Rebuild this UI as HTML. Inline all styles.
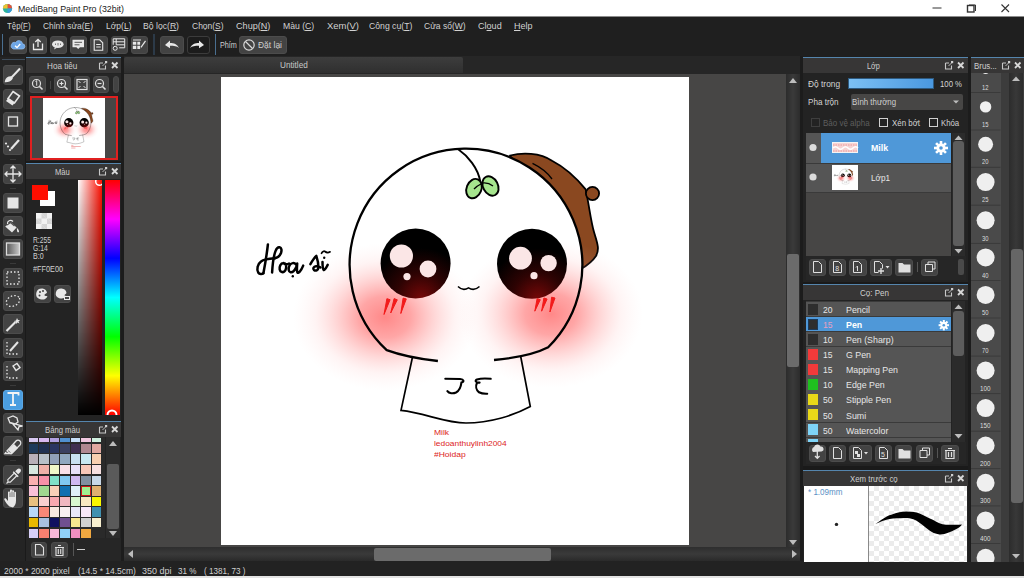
<!DOCTYPE html>
<html><head><meta charset="utf-8">
<style>
*{margin:0;padding:0;box-sizing:border-box}
html,body{width:1024px;height:578px;overflow:hidden;background:#202020;font-family:"Liberation Sans",sans-serif;color:#d8d8d8}
.a{position:absolute}
.t{position:absolute;white-space:pre;line-height:1;transform-origin:0 0}
.b{position:absolute;background:#464646;border:1px solid #505050;border-radius:2px}
.tb{position:absolute;background:#434343;border:1px solid #4c4c4c;border-radius:3px}
svg{position:absolute;overflow:visible}
</style></head><body>

<div class="a" style="left:0px;top:0px;width:1024px;height:16px;background:#fff;"></div>
<svg style="left:2px;top:3px" width="11" height="11" viewBox="0 0 11 11"><circle cx="5.5" cy="5.5" r="4.6" fill="#2bb39a"/><path d="M5.5 0.9 A4.6 4.6 0 0 1 10.1 5.5 L5.5 5.5Z" fill="#e8503a"/><path d="M10.1 5.5 A4.6 4.6 0 0 1 5.5 10.1 L5.5 5.5Z" fill="#3a9ad9"/><path d="M0.9 5.5 A4.6 4.6 0 0 1 5.5 0.9 L5.5 5.5Z" fill="#f2c230"/></svg>
<div class="t" style="left:17.8px;top:3.9px;font-size:9.8px;transform:scaleX(0.9012);color:#202020;">MediBang Paint Pro (32bit)</div>
<svg style="left:932px;top:4px" width="80" height="9"><path d="M0.5 4 H9.5" stroke="#333" stroke-width="1"/><rect x="35.5" y="1.5" width="6.5" height="6.5" fill="none" stroke="#333" stroke-width="1.4"/><path d="M37 1 H43.5 V7" fill="none" stroke="#333" stroke-width="1"/><path d="M69.5 0.5 L77 8 M77 0.5 L69.5 8" stroke="#333" stroke-width="1.1"/></svg>
<div class="a" style="left:0px;top:16px;width:1024px;height:17px;background:#1f1f1f;"></div>
<div class="a" style="left:0px;top:16px;width:1024px;height:1px;background:#8c8c8c;"></div>
<div class="t" style="left:7.0px;top:20.7px;font-size:9.8px;transform:scaleX(0.7991);color:#d2d2d2;">Tệp(<u>F</u>)</div>
<div class="t" style="left:43.0px;top:20.7px;font-size:9.8px;transform:scaleX(0.8574);color:#d2d2d2;">Chỉnh sửa(<u>E</u>)</div>
<div class="t" style="left:105.5px;top:20.7px;font-size:9.8px;transform:scaleX(0.8699);color:#d2d2d2;">Lớp(<u>L</u>)</div>
<div class="t" style="left:143.0px;top:20.7px;font-size:9.8px;transform:scaleX(0.8814);color:#d2d2d2;">Bộ lọc(<u>R</u>)</div>
<div class="t" style="left:191.7px;top:20.7px;font-size:9.8px;transform:scaleX(0.8658);color:#d2d2d2;">Chọn(<u>S</u>)</div>
<div class="t" style="left:235.6px;top:20.7px;font-size:9.8px;transform:scaleX(0.9289);color:#d2d2d2;">Chụp(<u>N</u>)</div>
<div class="t" style="left:282.6px;top:20.7px;font-size:9.8px;transform:scaleX(0.8816);color:#d2d2d2;">Màu (<u>C</u>)</div>
<div class="t" style="left:327.0px;top:20.7px;font-size:9.8px;transform:scaleX(0.9629);color:#d2d2d2;">Xem(<u>V</u>)</div>
<div class="t" style="left:368.7px;top:20.7px;font-size:9.8px;transform:scaleX(0.8834);color:#d2d2d2;">Công cụ(<u>T</u>)</div>
<div class="t" style="left:424.4px;top:20.7px;font-size:9.8px;transform:scaleX(0.8678);color:#d2d2d2;">Cửa sổ(<u>W</u>)</div>
<div class="t" style="left:478.0px;top:20.7px;font-size:9.8px;transform:scaleX(0.9249);color:#d2d2d2;">Cl<u>o</u>ud</div>
<div class="t" style="left:514.0px;top:20.7px;font-size:9.8px;transform:scaleX(0.9178);color:#d2d2d2;"><u>H</u>elp</div>
<div class="a" style="left:0px;top:33px;width:1024px;height:23px;background:#1f1f1f;"></div>
<div class="a" style="left:2px;top:34px;width:1px;height:21px;background:#4a6f90;"></div>
<div class="tb" style="left:9.0px;top:36px;width:17.5px;height:18px"></div>
<div class="tb" style="left:29.3px;top:36px;width:17.5px;height:18px"></div>
<div class="tb" style="left:49.6px;top:36px;width:17.5px;height:18px"></div>
<div class="tb" style="left:69.9px;top:36px;width:17.5px;height:18px"></div>
<div class="tb" style="left:90.2px;top:36px;width:17.5px;height:18px"></div>
<div class="tb" style="left:110.5px;top:36px;width:17.5px;height:18px"></div>
<div class="tb" style="left:130.8px;top:36px;width:17.5px;height:18px"></div>
<div class="a" style="left:153px;top:34px;width:2px;height:21px;background:#2c3a48;"></div>
<div class="tb" style="left:160px;top:36px;width:24px;height:18px"></div>
<div class="tb" style="left:187px;top:36px;width:23px;height:18px;background:#1c1c1c;border-color:#3c3c3c"></div>
<div class="a" style="left:215px;top:34px;width:1px;height:21px;background:#4a6f90;"></div>
<div class="t" style="left:219.8px;top:40.5px;font-size:9.2px;transform:scaleX(0.7878);color:#cfcfcf;">Phím</div>
<div class="tb" style="left:239px;top:36px;width:48px;height:18px"></div>
<div class="t" style="left:258.0px;top:40.5px;font-size:9.2px;transform:scaleX(0.9214);color:#cfcfcf;">Đặt lại</div>
<svg style="left:0;top:0" width="300" height="60">
<g fill="none" stroke="#e8e8e8" stroke-width="1.2">
<path d="M13.5 49 h8.5 a2.6 2.6 0 0 0 0.5-5.2 a3.6 3.6 0 0 0-6.8-1.2 a2.8 2.8 0 0 0-2.2 6.4z" fill="#6da6e6" stroke="#8fbcf0" stroke-width="0.8"/>
<path d="M15 45.8 l2 1.8 l3.2-3.6" stroke="#fff" stroke-width="1.3"/>
<path d="M33.5 43.5 v6 h9 v-6 M38 47 v-7.5 M35.3 42 l2.7-2.7 l2.7 2.7" stroke-width="1.3"/>
<ellipse cx="57.8" cy="44.3" rx="5.8" ry="3.8" fill="#e8e8e8" stroke="none"/><path d="M55 47 l-1 2.5 l3-1.8z" fill="#e8e8e8" stroke="none"/>
<path d="M55.5 43.5 v1.5 M58 43 v2.5 M60.5 43.5 v1.5" stroke="#555" stroke-width="0.8"/>
<path d="M72.5 39.8 h11.5 v7.5 h-4 l-1.8 1.8 l-1.8-1.8 h-3.9z" fill="#e8e8e8" stroke="none"/>
<path d="M74.5 42.3 h7.5 M74.5 44.8 h5" stroke="#555" stroke-width="1"/>
<path d="M94.2 39.8 h5.5 l3 3 v7.5 h-8.5z M96.2 44.5 h4.5 M96.2 47 h4.5" stroke-width="1.1"/>
<path d="M113.2 38.8 h11.5 v9 h-5.5 M113.2 38.8 v6 M113.2 41.8 h11.5 M116.2 38.8 v6 M116.2 44.8 h8.5" stroke-width="1"/>
<circle cx="115.2" cy="48.3" r="2" stroke-width="1"/>
<path d="M132.8 41.8 h3.5 v3 h-3.5z M137.3 41.8 h2.8 v3 h-2.8z M132.8 45.8 h3.5 v3.2 h-3.5z M137.3 45.8 h2.8 v3.2 h-2.8z" fill="#e8e8e8" stroke="none"/>
<path d="M140.5 47 l4.5-6.5 l1 0.8 l-4.5 6.5 z" fill="#e8e8e8" stroke="none"/><path d="M141 40 h-8" stroke-width="1"/>
<path d="M165 45 l5-4.5 v2.5 c4 0 7 1 9 5 c-2-2-5-2.3-9-2.3 v2.6z" fill="#e8e8e8" stroke="none"/>
<path d="M204 45 l-5-4.5 v2.5 c-4 0-7 1-9 5 c2-2 5-2.3 9-2.3 v2.6z" fill="#e8e8e8" stroke="none"/>
<circle cx="249" cy="45" r="5.2" stroke="#d8d8d8"/><path d="M245.5 41.5 l7 7" stroke="#d8d8d8"/>
</g></svg>
<div class="a" style="left:124px;top:56px;width:678px;height:506px;background:#262626;"></div>
<div class="a" style="left:124px;top:57px;width:339px;height:16px;background:linear-gradient(#3d3d3d,#2f2f2f);border-radius:2px 2px 0 0"></div>
<div class="t" style="left:279.6px;top:60.5px;font-size:9.2px;transform:scaleX(0.8923);color:#c8c8c8;">Untitled</div>
<div class="a" style="left:124px;top:74px;width:662px;height:473px;background:#474645;"></div>
<div class="a" style="left:221px;top:77px;width:468px;height:468px;background:#fff;"></div>
<div class="a" style="left:786px;top:74px;width:14px;height:473px;background:linear-gradient(90deg,#2c2c2c,#3a3a3a 50%,#2c2c2c)"></div>
<div class="a" style="left:787px;top:254px;width:12px;height:113px;background:#6b6b6b;border-radius:2px"></div>
<svg style="left:786px;top:74px" width="14" height="473"><path d="M3 9 L7 4 L11 9z" fill="#bdbdbd"/><path d="M3 466 L7 471 L11 466z" fill="#bdbdbd"/></svg>
<div class="a" style="left:124px;top:547px;width:676px;height:14px;background:linear-gradient(#2e2e2e,#3a3a3a 50%,#2a2a2a)"></div>
<div class="a" style="left:374px;top:548px;width:177px;height:12.5px;background:#6b6b6b;border-radius:2px"></div>
<svg style="left:124px;top:547px" width="676" height="14"><path d="M9 3 L4 7 L9 11z" fill="#bdbdbd"/><path d="M668 3 L673 7 L668 11z" fill="#bdbdbd"/></svg>
<div class="a" style="left:800px;top:56px;width:3px;height:506px;background:#1c1c1c;"></div>
<svg style="left:0;top:0" width="1024" height="578">
<defs>
<radialGradient id="blush" cx="0.5" cy="0.5" r="0.5">
<stop offset="0" stop-color="#ff5050" stop-opacity="0.68"/>
<stop offset="0.28" stop-color="#ff5a5a" stop-opacity="0.54"/>
<stop offset="0.52" stop-color="#ff7070" stop-opacity="0.3"/>
<stop offset="0.76" stop-color="#ff9a9a" stop-opacity="0.11"/>
<stop offset="1" stop-color="#ffc0c0" stop-opacity="0"/>
</radialGradient>
<radialGradient id="eyeg" cx="0.58" cy="1" r="0.72">
<stop offset="0" stop-color="#760808"/>
<stop offset="0.5" stop-color="#2e0303"/>
<stop offset="1" stop-color="#000"/>
</radialGradient>
<g id="chr">
<path d="M510,155.5 C522,152.5 540,152.5 552,160.8 C566,168 578,180 585.7,189.4 C589,205 591,222 594,232 C597,242 600,249 596,256 C592,262 588,265 581,269 L560,240 L522,172 Z" fill="#8a4820" stroke="#000" stroke-width="1.8" stroke-linejoin="round"/>
<circle cx="592.5" cy="193.5" r="6.6" fill="#8a4820" stroke="#000" stroke-width="1.8"/>
<path d="M437.9,361 C420,359 400,355 386.7,350.1 C352.0,317.7 340.4,267.6 357.4,223.3 C374.4,179.1 416.6,149.5 464.0,148.7 C511.4,147.9 554.5,175.9 573.1,219.6 C591.6,263.2 581.8,313.7 548.2,347.2 C535,354 515,358 494,360 Z" fill="#fff"/>

<ellipse cx="385" cy="317" rx="92" ry="74" fill="url(#blush)"/>
<ellipse cx="551" cy="314" rx="92" ry="74" fill="url(#blush)"/>
<path d="M532.5,163.4 C540,167 547,172 552,179" fill="none" stroke="#000" stroke-width="1.3"/>
<path d="M437.9,361 C420,359 400,355 386.7,350.1 C352.0,317.7 340.4,267.6 357.4,223.3 C374.4,179.1 416.6,149.5 464.0,148.7 C511.4,147.9 554.5,175.9 573.1,219.6 C591.6,263.2 581.8,313.7 548.2,347.2 C535,354 515,358 494,360" fill="none" stroke="#000" stroke-width="2.3"/>
<path d="M457.9,149 C468,156 478,168 480.3,181.6" fill="none" stroke="#000" stroke-width="1.9"/>
<ellipse cx="474" cy="188.6" rx="7.4" ry="10" transform="rotate(22 474 188.6)" fill="#a6e58e" stroke="#000" stroke-width="1.9"/>
<ellipse cx="490.5" cy="186" rx="7.4" ry="10.2" transform="rotate(-28 490.5 186)" fill="#a6e58e" stroke="#000" stroke-width="1.9"/>
<path d="M474,189 Q477.5,185.5 481,184 M482,183 Q488,182 493,186" fill="none" stroke="#000" stroke-width="1.3"/>
<circle cx="415.6" cy="263.5" r="35" fill="url(#eyeg)"/>
<circle cx="532" cy="263.8" r="35" fill="url(#eyeg)"/>
<g fill="#fbe6e6">
<circle cx="401.4" cy="256" r="11.6"/><circle cx="428" cy="269" r="8.4"/><circle cx="407" cy="276.6" r="3.6"/>
<circle cx="520.5" cy="258.2" r="11.4"/><circle cx="548.6" cy="263.1" r="8.2"/><circle cx="534" cy="275.7" r="3.6"/>
</g>
<path d="M458,286.5 Q463,291.5 468.5,287.8 Q474,291.5 479.5,286.5" fill="none" stroke="#000" stroke-width="1.5"/>
<path d="M386.9,298.7 L390.1,299.7 L384.0,314.5Z M394.1,298.6 L397.3,299.8 L390.7,313.0Z M403.1,298.1 L406.3,298.9 L400.8,313.5Z M537.1,298.7 L540.3,299.7 L534.8,311.2Z M543.9,298.0 L547.1,299.0 L541.6,311.2Z M551.6,297.2 L555.0,298.0 L549.9,312.0Z" fill="#f21a1a" stroke="#f21a1a" stroke-width="1" stroke-linejoin="round"/>
<g fill="none" stroke="#000" stroke-width="1.7" stroke-linecap="round">
<path d="M412.3,358 L401,410.4 C425,413 445,423 466,423 C490,423 515,415 530.3,406.6 L520.8,357"/>
</g>
<g fill="none" stroke="#000" stroke-width="1.8" stroke-linecap="round">
<path d="M445.3,378.8 L460,379 C464,379.5 464.5,381.5 461.4,382.6 C461,386 460.5,390 456,392.5 C453,393.8 449,393.5 447.4,391.1" stroke-width="2.1"/>
<path d="M490.7,378.8 C485,378.3 480,378.5 477,379.5 C474.5,380.5 475.5,382.8 479.6,382.6 M477,382.8 C475.5,386 476,390 479,392.3 C482,393.8 485,393.8 487.2,393.7" stroke-width="2.1"/>
</g>
<g fill="none" stroke="#000" stroke-width="2.5" stroke-linecap="round" stroke-linejoin="round">
<path d="M267.9,244.5 C266.8,254 265,265 263.4,273.2"/>
<path d="M263.4,273.2 C262,274.5 259.5,274.5 258.2,272.5 C256.5,269.5 257.5,264 261,261.5 C263.5,259.5 268,258.7 274.8,258.3"/>
<path d="M272.1,272.5 C272.5,266 273.5,256 275.5,251.1 C276.5,248.5 278,247 279.5,247.3 C281.5,247.8 282,250 281,253 C280,255.5 277.5,257.8 274.8,258.3"/>
<path d="M283.5,263 C280.5,263 279.2,267 279.7,269.5 C280.2,272 282.5,272.8 284.3,271.5 C286.3,270 286.8,266 285.5,264 C285,263.2 284.2,263 283.5,263 C285,264.5 287,264.5 289,263.5"/>
<path d="M296,264.5 C294.5,262.5 291,262.5 289.5,265.5 C288,268.5 288.5,272 290.5,272.3 C292.5,272.6 295,270 296.5,266.5 L297.2,263.5 C297,267 296.5,271 297.5,272.5 C298.5,273.5 301,271 303.2,265.6"/>
<path d="M310.4,264.2 C312.5,260.5 315,257 316.3,255.9 C317.2,258.5 318.5,264 318.4,267.5 C318.3,270.5 315.5,271.2 314,270 C312.5,268.7 313.5,266.5 316,266.3 C318,266.2 319.5,267 320.5,267.5"/>
<path d="M322.5,262 C322.5,265 322.8,269 323.8,270 C325,270.5 326.5,267 327.7,264.9"/>
<path d="M321.5,253.3 C322.5,251.5 324,250.8 325,251.5 C326.5,252.8 328,253 330.1,251.8" stroke-width="1.7"/>
</g>
<circle cx="292.8" cy="276.2" r="1.2" fill="#000"/>
<circle cx="324.2" cy="257.8" r="1.2" fill="#000"/>
</g>
</defs>
<use href="#chr"/></svg>
<div class="t" style="left:434.2px;top:429.4px;font-size:8px;transform:scaleX(1.0620);color:#dc1c1c;">Milk</div>
<div class="t" style="left:434.2px;top:440.2px;font-size:8px;transform:scaleX(1.0475);color:#dc1c1c;">ledoanthuylinh2004</div>
<div class="t" style="left:434.2px;top:450.9px;font-size:8px;transform:scaleX(1.0633);color:#dc1c1c;">#Hoidap</div>
<div class="a" style="left:0px;top:561px;width:1024px;height:15px;background:#222;"></div>
<div class="a" style="left:0px;top:576px;width:1024px;height:2px;background:#e4e4e4;"></div>
<div class="t" style="left:4.4px;top:566.1px;font-size:9.6px;transform:scaleX(0.8846);color:#d0d0d0;">2000 * 2000 pixel</div>
<div class="t" style="left:77.6px;top:566.1px;font-size:9.6px;transform:scaleX(0.8827);color:#d0d0d0;">(14.5 * 14.5cm)</div>
<div class="t" style="left:141.6px;top:566.1px;font-size:9.6px;transform:scaleX(0.9338);color:#d0d0d0;">350 dpi</div>
<div class="t" style="left:178.0px;top:566.1px;font-size:9.6px;transform:scaleX(0.8457);color:#d0d0d0;">31 %</div>
<div class="t" style="left:204.0px;top:566.1px;font-size:9.6px;transform:scaleX(0.8436);color:#d0d0d0;">( 1381, 73 )</div>
<div class="a" style="left:0px;top:57px;width:25px;height:504px;background:#242424;"></div>
<div class="a" style="left:2px;top:59px;width:23px;height:1px;background:#3e4c5a;"></div>
<div class="tb" style="left:3px;top:65px;width:20px;height:20px"></div>
<div class="tb" style="left:3px;top:88.6px;width:20px;height:20px"></div>
<div class="tb" style="left:3px;top:112px;width:20px;height:20px"></div>
<div class="tb" style="left:3px;top:134.5px;width:20px;height:20px"></div>
<div class="tb" style="left:3px;top:163.7px;width:20px;height:20px"></div>
<div class="tb" style="left:3px;top:193px;width:20px;height:20px"></div>
<div class="tb" style="left:3px;top:216px;width:20px;height:20px"></div>
<div class="tb" style="left:3px;top:239.4px;width:20px;height:20px"></div>
<div class="tb" style="left:3px;top:268px;width:20px;height:20px"></div>
<div class="tb" style="left:3px;top:291.2px;width:20px;height:20px"></div>
<div class="tb" style="left:3px;top:314.4px;width:20px;height:20px"></div>
<div class="tb" style="left:3px;top:337.8px;width:20px;height:20px"></div>
<div class="tb" style="left:3px;top:361px;width:20px;height:20px"></div>
<div class="tb" style="left:3px;top:389.7px;width:20px;height:20px;background:#4b9ee0;border-color:#5aa8e6"></div>
<div class="tb" style="left:3px;top:413px;width:20px;height:20px"></div>
<div class="tb" style="left:3px;top:436.4px;width:20px;height:20px"></div>
<div class="tb" style="left:3px;top:465px;width:20px;height:20px"></div>
<div class="tb" style="left:3px;top:488px;width:20px;height:20px"></div>
<div class="a" style="left:10px;top:159px;width:6px;height:1px;background:#3a3a3a;"></div>
<div class="a" style="left:10px;top:188px;width:6px;height:1px;background:#3a3a3a;"></div>
<div class="a" style="left:10px;top:263px;width:6px;height:1px;background:#3a3a3a;"></div>
<div class="a" style="left:10px;top:385px;width:6px;height:1px;background:#3a3a3a;"></div>
<div class="a" style="left:10px;top:460px;width:6px;height:1px;background:#3a3a3a;"></div>
<svg style="left:0;top:0" width="26" height="520"><g fill="none" stroke="#e6e6e6" stroke-width="1.3">
<path d="M20 68.5 L11 78" stroke-width="2"/><path d="M11 77 c-3 0-5 2-5.5 4.5 c3 0 5-1 6.5-3z" fill="#e6e6e6"/>
<path d="M13 91.5 l6.5 4.5 l-5 7 l-6.5-4.5z" fill="none" stroke-width="1.6"/><path d="M8 98.5 l6.5 4.5 l-2 2.5 l-6.5-4.5z" fill="#e6e6e6" stroke="none"/>
<rect x="8.5" y="117" width="9" height="9"/>
<path d="M11 149 l8-9" stroke-width="2.2"/><circle cx="6" cy="143.5" r="1.1" fill="#e6e6e6" stroke="none"/><circle cx="8" cy="146.5" r="1.1" fill="#e6e6e6" stroke="none"/><circle cx="10" cy="150" r="1.1" fill="#e6e6e6" stroke="none"/>
<path d="M13 166 v16 M5 174 h16 M10.5 168.5 l2.5-2.5 l2.5 2.5 M10.5 179.5 l2.5 2.5 l2.5-2.5 M7.5 171.5 l-2.5 2.5 l2.5 2.5 M18.5 171.5 l2.5 2.5 l-2.5 2.5"/>
<rect x="7.5" y="197.5" width="11" height="11" fill="#e6e6e6" stroke="none"/>
<path d="M5.2 226.5 l5.6-4.2 l5.8 5.2 l-4.6 5z" fill="#e6e6e6" stroke="none"/><path d="M7 225 l3.5-2.5 l4 3.5" stroke="#555" stroke-width="1.2"/><path d="M7.5 224 c-0.5-3 3-5 5.5-2.5" stroke-width="1.2"/><path d="M16.8 227.8 c1.2 1.2 2.6 3 2.2 4.2 c-0.6 0.8-2 0.2-2-1.6z" fill="#e6e6e6" stroke="none"/>
<rect x="6.5" y="243" width="13" height="12" fill="url(#gr)" stroke="#ddd"/>
<path d="M7 272 h12 v12 h-12z" stroke-dasharray="1.5 2"/>
<ellipse cx="13" cy="301" rx="7" ry="5" transform="rotate(-25 13 301)" stroke-dasharray="1.5 2"/>
<path d="M6.5 331 l9-9" stroke-width="2.2"/><path d="M17 318 l1 2 l2 0 l-1.5 1.5 l1 2 l-2-1 l-1.5 1.5 v-2 l-2-1 l2-.5z" fill="#e6e6e6" stroke="none"/>
<path d="M7 342 v12 h12" stroke-dasharray="1.5 2"/><path d="M10 351 l8-9" stroke-width="2"/>
<path d="M7 366 v12 h12" stroke-dasharray="1.5 2"/><path d="M13 366 l4 -2.5 l3 4 l-4 3z" stroke-width="1.4"/>
<path d="M7.5 393 h11 v2.5 M13 393 v12 M10 405 h6" stroke-width="1.8" stroke="#f4f4f4"/>
<path d="M8 418 l5-2 l4 2 l1 4 l-3 2 l-5-1z M12 423 l6 7 l1-3.5 l3.5-.5z"/>
<path d="M7 451 l9-10 c1-1 3-1 4 0 c1 1 1 3 0 4 l-9 9z M6 452 l-1 1.5 h6" stroke-width="1.3"/><path d="M8 450 l6 -6 l4 4 l-6 6z" fill="#e6e6e6" stroke="none"/>
<path d="M6.5 483.5 l1.2-1.2 M8 482 l-0.2-2.3 l6.5-6.5 l2.5 2.5 l-6.5 6.5z" stroke-width="1.2"/><path d="M13.2 471.8 l5 5" stroke-width="1.4"/><path d="M15.2 471.2 l2-2 c1-1 2.4-1 3.2-.2 c.8 .8 .8 2.2-.2 3.2 l-2 2z" fill="#e6e6e6" stroke="none"/>
<path d="M9.5 506.5 c-2-1.5-4.5-5-5.2-7 c-.3-1 .8-1.8 1.8-.8 l1.9 2.2 v-8.5 c0-1.3 2-1.3 2 0 v5.5 v-7.5 c0-1.3 2-1.3 2 0 v7.5 v-6.8 c0-1.3 2-1.3 2 0 v6.8 v-5.2 c0-1.3 2-1.3 2 0 v8 c0 3-1.2 5.5-3 6.8z" fill="#e6e6e6" stroke="none"/><path d="M10 497 v-4.5 M12 497 v-5.5 M14 497 v-4.8" stroke="#444" stroke-width="0.7"/>
</g><defs><linearGradient id="gr" x1="0" x2="1"><stop offset="0" stop-color="#555"/><stop offset="1" stop-color="#c8c8c8"/></linearGradient></defs></svg>
<div class="a" style="left:25px;top:57px;width:1px;height:504px;background:#1a1a1a;"></div>
<div class="a" style="left:121px;top:57px;width:3px;height:504px;background:#1c1c1c;"></div>
<div class="a" style="left:26px;top:57px;width:95px;height:104px;background:#232323;"></div>
<div class="a" style="left:26px;top:57px;width:95px;height:16px;background:#373636;border-top:1px solid #5585ad"></div>
<div class="t" style="left:46.9px;top:61.8px;font-size:9.2px;transform:scaleX(0.8880);color:#cfcfcf;">Hoa tiêu</div>
<svg style="left:97.8px;top:60px" width="20" height="10"><path d="M1.5 3 v6 h6 v-3.5 M5 3 h-3.5" fill="none" stroke="#c8c8c8" stroke-width="1.1"/><path d="M4.5 6 l3-3" fill="none" stroke="#c8c8c8" stroke-width="0.9"/><rect x="7" y="1" width="2.2" height="2.2" fill="#d0d0d0"/><path d="M14 2.5 l5.5 5.5 M19.5 2.5 l-5.5 5.5" stroke="#d8d8d8" stroke-width="1.8"/></svg>
<div class="a" style="left:26px;top:74px;width:95px;height:21px;background:#262626;"></div>
<div class="tb" style="left:29.3px;top:76px;width:16.6px;height:17px"></div>
<div class="tb" style="left:54px;top:76px;width:16.7px;height:17px"></div>
<div class="tb" style="left:73.9px;top:76px;width:15.8px;height:17px"></div>
<div class="tb" style="left:92.6px;top:76px;width:16.2px;height:17px"></div>
<div class="tb" style="left:113px;top:76px;width:6px;height:17px"></div>
<div class="a" style="left:49.5px;top:81px;width:1px;height:8px;background:#444;"></div>
<svg style="left:0;top:0" width="122" height="100"><g fill="none" stroke="#e0e0e0" stroke-width="1.2">
<circle cx="36.5" cy="83.5" r="4"/><path d="M39.5 86.5 l3 3" stroke-width="1.6"/><path d="M35.5 81.5 l1.2-.8 v5" stroke-width="1"/>
<circle cx="61.5" cy="83.5" r="4"/><path d="M64.5 86.5 l3 3" stroke-width="1.6"/><path d="M59.5 83.5 h4 M61.5 81.5 v4"/>
<rect x="77" y="79.5" width="10" height="10"/><path d="M78.5 81 l2 2 M85.5 81 l-2 2 M78.5 88 l2-2 M85.5 88 l-2-2" stroke-width="1"/>
<circle cx="99.5" cy="83.5" r="4"/><path d="M102.5 86.5 l3 3" stroke-width="1.6"/><path d="M97.5 83.5 h4"/>
</g></svg>
<div class="a" style="left:30px;top:96px;width:88px;height:64px;background:#e02020;"></div>
<div class="a" style="left:32px;top:98px;width:84px;height:60px;background:#474645;"></div>
<div class="a" style="left:43px;top:98px;width:62px;height:60px;background:#fff;"></div>
<svg style="left:0;top:0" width="1024" height="578"><svg x="43" y="98" width="62" height="60" style="overflow:hidden"><use href="#chr" transform="scale(0.13248) translate(-221,-77)"/><g transform="scale(0.13248) translate(-221,-77)"><rect x="434" y="431" width="16" height="5" fill="#e04040" opacity="0.6"/><rect x="434" y="441.5" width="72" height="5" fill="#e04040" opacity="0.6"/><rect x="434" y="452" width="32" height="5" fill="#e04040" opacity="0.6"/></g></svg></svg>
<div class="a" style="left:26px;top:161px;width:95px;height:2px;background:#1a1a1a;"></div>
<div class="a" style="left:26px;top:163px;width:95px;height:258px;background:#232323;"></div>
<div class="a" style="left:26px;top:163px;width:95px;height:16px;background:#373636;border-top:1px solid #5585ad"></div>
<div class="t" style="left:54.7px;top:167.5px;font-size:9.2px;transform:scaleX(0.8280);color:#cfcfcf;">Màu</div>
<svg style="left:97.8px;top:166px" width="20" height="10"><path d="M1.5 3 v6 h6 v-3.5 M5 3 h-3.5" fill="none" stroke="#c8c8c8" stroke-width="1.1"/><path d="M4.5 6 l3-3" fill="none" stroke="#c8c8c8" stroke-width="0.9"/><rect x="7" y="1" width="2.2" height="2.2" fill="#d0d0d0"/><path d="M14 2.5 l5.5 5.5 M19.5 2.5 l-5.5 5.5" stroke="#d8d8d8" stroke-width="1.8"/></svg>
<div class="a" style="left:39.8px;top:191.4px;width:15.5px;height:15px;background:#fff;"></div>
<div class="a" style="left:32px;top:184.5px;width:16px;height:15.5px;background:#ff0e00;"></div>
<div class="a" style="left:35.5px;top:212.7px;width:16.5px;height:16.7px;background:#f2f2f2;background-image:linear-gradient(45deg,#d6d6d6 25%,transparent 25%,transparent 75%,#d6d6d6 75%),linear-gradient(45deg,#d6d6d6 25%,transparent 25%,transparent 75%,#d6d6d6 75%);background-size:11px 11px;background-position:0 0,5.5px 5.5px"></div>
<div class="t" style="left:32.6px;top:237.1px;font-size:8.2px;transform:scaleX(0.8189);color:#d0d0d0;">R:255</div>
<div class="t" style="left:32.6px;top:245.1px;font-size:8.2px;transform:scaleX(0.8274);color:#d0d0d0;">G:14</div>
<div class="t" style="left:32.6px;top:252.9px;font-size:8.2px;transform:scaleX(0.8620);color:#d0d0d0;">B:0</div>
<div class="t" style="left:32.6px;top:265.5px;font-size:8.2px;transform:scaleX(0.8905);color:#d0d0d0;">#FF0E00</div>
<div class="tb" style="left:33.7px;top:285.3px;width:17.5px;height:18px"></div>
<div class="tb" style="left:54px;top:285.3px;width:17px;height:18px"></div>
<svg style="left:0;top:0" width="122" height="310"><g fill="#e8e8e8">
<path d="M42.5 288.5 a6 5.5 0 1 0 5 8 c-1-1-3 0-3-1.5 c0-1.5 2-1 2.5-2.5 a6 5.5 0 0 0-4.5-4z"/>
<circle cx="40" cy="292" r="1" fill="#444"/><circle cx="43" cy="291" r="1" fill="#444"/><circle cx="39.5" cy="295.5" r="1" fill="#444"/>
<path d="M61.5 288.5 a5.5 5 0 1 0 4.5 7.5 l-1.5-.5 c0-1.5 1.5-1 2-2.5 a5.5 5 0 0 0-5-4.5z"/>
<rect x="64" y="296" width="6" height="4" fill="#e8e8e8"/><rect x="65" y="297" width="4" height="2" fill="#444"/>
</g></svg>
<div class="a" style="left:77.6px;top:179.6px;width:24.4px;height:235.7px;background:linear-gradient(to bottom,rgba(0,0,0,0),#000),linear-gradient(to right,#fff,#ff0e00)"></div>
<div class="a" style="left:77.6px;top:179.6px;width:24.4px;height:12px;overflow:hidden"><svg style="left:0;top:0" width="30" height="12"><circle cx="21.5" cy="1.5" r="3.8" fill="none" stroke="#fff" stroke-width="1.5"/></svg></div>
<div class="a" style="left:104.6px;top:179.6px;width:15.2px;height:235.7px;background:linear-gradient(to bottom,#f00 0%,#f0f 16.7%,#00f 33.3%,#0ff 50%,#0f0 66.7%,#ff0 83.3%,#f00 100%)"></div>
<svg style="left:104px;top:400px" width="16" height="16"><path d="M3.5 15 a4.5 4.5 0 1 1 9 0" fill="none" stroke="#fff" stroke-width="2"/></svg>
<div class="a" style="left:26px;top:421px;width:95px;height:140px;background:#232323;"></div>
<div class="a" style="left:26px;top:421px;width:95px;height:16px;background:#373636;border-top:1px solid #5585ad"></div>
<div class="t" style="left:44.9px;top:425.7px;font-size:9.2px;transform:scaleX(0.8379);color:#cfcfcf;">Bảng màu</div>
<svg style="left:97.8px;top:424px" width="20" height="10"><path d="M1.5 3 v6 h6 v-3.5 M5 3 h-3.5" fill="none" stroke="#c8c8c8" stroke-width="1.1"/><path d="M4.5 6 l3-3" fill="none" stroke="#c8c8c8" stroke-width="0.9"/><rect x="7" y="1" width="2.2" height="2.2" fill="#d0d0d0"/><path d="M14 2.5 l5.5 5.5 M19.5 2.5 l-5.5 5.5" stroke="#d8d8d8" stroke-width="1.8"/></svg>
<div class="a" style="left:27px;top:437px;width:78px;height:101px;background:#2a2a2a;"></div>
<div class="a" style="left:28.5px;top:438px;width:9.5px;height:4.4px;background:#d8c8f0"></div>
<div class="a" style="left:39px;top:438px;width:9.5px;height:4.4px;background:#d8b8f0"></div>
<div class="a" style="left:49.5px;top:438px;width:9.5px;height:4.4px;background:#b0a0e0"></div>
<div class="a" style="left:60px;top:438px;width:9.5px;height:4.4px;background:#5090d0"></div>
<div class="a" style="left:70.5px;top:438px;width:9.5px;height:4.4px;background:#c8e0f8"></div>
<div class="a" style="left:81px;top:438px;width:9.5px;height:4.4px;background:#f0c8e0"></div>
<div class="a" style="left:91.5px;top:438px;width:9.5px;height:4.4px;background:#d0f0e0"></div>
<div class="a" style="left:28.5px;top:443.8px;width:9.5px;height:9.4px;background:#1e3a5a"></div>
<div class="a" style="left:39px;top:443.8px;width:9.5px;height:9.4px;background:#203050"></div>
<div class="a" style="left:49.5px;top:443.8px;width:9.5px;height:9.4px;background:#2a3560"></div>
<div class="a" style="left:60px;top:443.8px;width:9.5px;height:9.4px;background:#3a4060"></div>
<div class="a" style="left:70.5px;top:443.8px;width:9.5px;height:9.4px;background:#403050"></div>
<div class="a" style="left:81px;top:443.8px;width:9.5px;height:9.4px;background:#b08890"></div>
<div class="a" style="left:91.5px;top:443.8px;width:9.5px;height:9.4px;background:#e0a8a0"></div>
<div class="a" style="left:28.5px;top:454.4px;width:9.5px;height:9.4px;background:#b8b0b8"></div>
<div class="a" style="left:39px;top:454.4px;width:9.5px;height:9.4px;background:#b8c0c8"></div>
<div class="a" style="left:49.5px;top:454.4px;width:9.5px;height:9.4px;background:#90a0b8"></div>
<div class="a" style="left:60px;top:454.4px;width:9.5px;height:9.4px;background:#90a8c0"></div>
<div class="a" style="left:70.5px;top:454.4px;width:9.5px;height:9.4px;background:#c8e0f0"></div>
<div class="a" style="left:81px;top:454.4px;width:9.5px;height:9.4px;background:#c8e8f0"></div>
<div class="a" style="left:91.5px;top:454.4px;width:9.5px;height:9.4px;background:#f8d0b0"></div>
<div class="a" style="left:28.5px;top:465px;width:9.5px;height:9.4px;background:#d8e8e0"></div>
<div class="a" style="left:39px;top:465px;width:9.5px;height:9.4px;background:#f0b0a8"></div>
<div class="a" style="left:49.5px;top:465px;width:9.5px;height:9.4px;background:#f0f8c8"></div>
<div class="a" style="left:60px;top:465px;width:9.5px;height:9.4px;background:#f8e0e8"></div>
<div class="a" style="left:70.5px;top:465px;width:9.5px;height:9.4px;background:#e8e0f8"></div>
<div class="a" style="left:81px;top:465px;width:9.5px;height:9.4px;background:#f8c8b8"></div>
<div class="a" style="left:91.5px;top:465px;width:9.5px;height:9.4px;background:#f8e0e0"></div>
<div class="a" style="left:28.5px;top:475.6px;width:9.5px;height:9.4px;background:#f8b0b0"></div>
<div class="a" style="left:39px;top:475.6px;width:9.5px;height:9.4px;background:#f890a8"></div>
<div class="a" style="left:49.5px;top:475.6px;width:9.5px;height:9.4px;background:#80e0c8"></div>
<div class="a" style="left:60px;top:475.6px;width:9.5px;height:9.4px;background:#80c8f0"></div>
<div class="a" style="left:70.5px;top:475.6px;width:9.5px;height:9.4px;background:#d0b8f0"></div>
<div class="a" style="left:81px;top:475.6px;width:9.5px;height:9.4px;background:#8090a0"></div>
<div class="a" style="left:91.5px;top:475.6px;width:9.5px;height:9.4px;background:#c8d8e8"></div>
<div class="a" style="left:28.5px;top:486.2px;width:9.5px;height:9.4px;background:#f8c0d8"></div>
<div class="a" style="left:39px;top:486.2px;width:9.5px;height:9.4px;background:#a0d890"></div>
<div class="a" style="left:49.5px;top:486.2px;width:9.5px;height:9.4px;background:#f8d0b8"></div>
<div class="a" style="left:60px;top:486.2px;width:9.5px;height:9.4px;background:#1070b0"></div>
<div class="a" style="left:70.5px;top:486.2px;width:9.5px;height:9.4px;background:#e0f0f8"></div>
<div class="a" style="left:81px;top:486.2px;width:9.5px;height:9.4px;background:#a0f090;border:1.5px solid #d01818"></div>
<div class="a" style="left:91.5px;top:486.2px;width:9.5px;height:9.4px;background:#e0b070"></div>
<div class="a" style="left:28.5px;top:496.8px;width:9.5px;height:9.4px;background:#e8c080"></div>
<div class="a" style="left:39px;top:496.8px;width:9.5px;height:9.4px;background:#f8d0d0"></div>
<div class="a" style="left:49.5px;top:496.8px;width:9.5px;height:9.4px;background:#f8a8b0"></div>
<div class="a" style="left:60px;top:496.8px;width:9.5px;height:9.4px;background:#f0b8c0"></div>
<div class="a" style="left:70.5px;top:496.8px;width:9.5px;height:9.4px;background:#d8f8d0"></div>
<div class="a" style="left:81px;top:496.8px;width:9.5px;height:9.4px;background:#f8e8c0"></div>
<div class="a" style="left:91.5px;top:496.8px;width:9.5px;height:9.4px;background:#f8f800"></div>
<div class="a" style="left:28.5px;top:507.4px;width:9.5px;height:9.4px;background:#b8d8f8"></div>
<div class="a" style="left:39px;top:507.4px;width:9.5px;height:9.4px;background:#f88878"></div>
<div class="a" style="left:49.5px;top:507.4px;width:9.5px;height:9.4px;background:#f8e8e0"></div>
<div class="a" style="left:60px;top:507.4px;width:9.5px;height:9.4px;background:#f8f0f0"></div>
<div class="a" style="left:70.5px;top:507.4px;width:9.5px;height:9.4px;background:#e8e8f8"></div>
<div class="a" style="left:81px;top:507.4px;width:9.5px;height:9.4px;background:#f8e8f8"></div>
<div class="a" style="left:91.5px;top:507.4px;width:9.5px;height:9.4px;background:#4090b0"></div>
<div class="a" style="left:28.5px;top:518px;width:9.5px;height:9.4px;background:#e8b800"></div>
<div class="a" style="left:39px;top:518px;width:9.5px;height:9.4px;background:#a8c0e0"></div>
<div class="a" style="left:49.5px;top:518px;width:9.5px;height:9.4px;background:#101060"></div>
<div class="a" style="left:60px;top:518px;width:9.5px;height:9.4px;background:#705090"></div>
<div class="a" style="left:70.5px;top:518px;width:9.5px;height:9.4px;background:#f8e890"></div>
<div class="a" style="left:81px;top:518px;width:9.5px;height:9.4px;background:#d0d0d0"></div>
<div class="a" style="left:91.5px;top:518px;width:9.5px;height:9.4px;background:#f8f0d0"></div>
<div class="a" style="left:28.5px;top:528.6px;width:9.5px;height:9.4px;background:#d8d0f8"></div>
<div class="a" style="left:39px;top:528.6px;width:9.5px;height:9.4px;background:#f88070"></div>
<div class="a" style="left:49.5px;top:528.6px;width:9.5px;height:9.4px;background:#f8b8d8"></div>
<div class="a" style="left:60px;top:528.6px;width:9.5px;height:9.4px;background:#90d0f8"></div>
<div class="a" style="left:70.5px;top:528.6px;width:9.5px;height:9.4px;background:#f090c0"></div>
<div class="a" style="left:81px;top:528.6px;width:9.5px;height:9.4px;background:#f0a840"></div>
<div class="a" style="left:106px;top:437px;width:14px;height:101px;background:#2c2c2c"></div>
<div class="a" style="left:107px;top:464px;width:12px;height:65px;background:#5a5a5a;border-radius:2px"></div>
<svg style="left:106px;top:437px" width="14" height="101"><path d="M3 9 L7 4 L11 9z" fill="#bdbdbd"/><path d="M3 94 L7 99 L11 94z" fill="#bdbdbd"/></svg>
<div class="a" style="left:26px;top:538px;width:95px;height:23px;background:#262626;"></div>
<div class="tb" style="left:31.4px;top:541.6px;width:16px;height:16px"></div>
<div class="tb" style="left:51px;top:541.6px;width:17px;height:16px"></div>
<div class="a" style="left:73px;top:543px;width:1px;height:13px;background:#555;"></div>
<div class="a" style="left:77px;top:549px;width:8px;height:1px;background:#cfcfcf;"></div>
<svg style="left:0;top:0" width="122" height="562"><g fill="none" stroke="#e0e0e0" stroke-width="1.1">
<path d="M35.5 544.5 h5 l3 3 v7.5 h-8z"/>
<path d="M55 547.5 h9 M56 547.5 v8 h7 v-8 M58 545.5 h3 M58.3 549 v5 M60.7 549 v5"/>
</g></svg>
<div class="a" style="left:803px;top:56px;width:221px;height:506px;background:#1e1e1e;"></div>
<div class="a" style="left:803px;top:57px;width:165px;height:225px;background:#232323;"></div>
<div class="a" style="left:803px;top:57px;width:165px;height:16px;background:#373636;border-top:1px solid #5585ad"></div>
<div class="t" style="left:867.3px;top:61.8px;font-size:9.2px;transform:scaleX(0.7938);color:#cfcfcf;">Lớp</div>
<svg style="left:944px;top:60px" width="20" height="10"><path d="M1.5 3 v6 h6 v-3.5 M5 3 h-3.5" fill="none" stroke="#c8c8c8" stroke-width="1.1"/><path d="M4.5 6 l3-3" fill="none" stroke="#c8c8c8" stroke-width="0.9"/><rect x="7" y="1" width="2.2" height="2.2" fill="#d0d0d0"/><path d="M14 2.5 l5.5 5.5 M19.5 2.5 l-5.5 5.5" stroke="#d8d8d8" stroke-width="1.8"/></svg>
<div class="t" style="left:808.4px;top:79.8px;font-size:9.2px;transform:scaleX(0.9106);color:#d4d4d4;">Độ trong</div>
<div class="a" style="left:848px;top:78px;width:86px;height:11px;background:linear-gradient(90deg,#7cc0f4,#4a98e0);border:1px solid #2e5a80"></div>
<div class="t" style="left:940.0px;top:79.8px;font-size:9.2px;transform:scaleX(0.8441);color:#d4d4d4;">100 %</div>
<div class="t" style="left:808.4px;top:98.4px;font-size:9.2px;transform:scaleX(0.8810);color:#d4d4d4;">Pha trộn</div>
<div class="a" style="left:851px;top:94px;width:112px;height:16px;background:#474645;border-radius:2px"></div>
<div class="t" style="left:852.2px;top:98.4px;font-size:9.2px;transform:scaleX(0.8561);color:#cfcfcf;">Bình thường</div>
<svg style="left:952px;top:99px" width="8" height="6"><path d="M1 1.5 h6 l-3 3z" fill="#bdbdbd"/></svg>
<div class="a" style="left:811px;top:118px;width:8.5px;height:8.5px;border:1px solid #3e3e3e"></div>
<div class="t" style="left:823.4px;top:118.7px;font-size:9.2px;transform:scaleX(0.8687);color:#5e5e5e;">Bảo vệ alpha</div>
<div class="a" style="left:879.2px;top:118px;width:8.7px;height:8.7px;border:1px solid #cfcfcf"></div>
<div class="t" style="left:891.7px;top:118.7px;font-size:9.2px;transform:scaleX(0.8591);color:#d4d4d4;">Xén bớt</div>
<div class="a" style="left:928.9px;top:118px;width:8.7px;height:8.7px;border:1px solid #cfcfcf"></div>
<div class="t" style="left:941.0px;top:118.7px;font-size:9.2px;transform:scaleX(0.8477);color:#d4d4d4;">Khóa</div>
<div class="a" style="left:806px;top:133px;width:145px;height:123px;background:#474645;"></div>
<div class="a" style="left:806px;top:133px;width:145px;height:29.5px;background:#555555;"></div>
<div class="a" style="left:820.8px;top:133px;width:130px;height:29.5px;background:#4f98d8;"></div>
<div class="a" style="left:806px;top:162.5px;width:145px;height:1px;background:#3a3a3a;"></div>
<div class="a" style="left:806px;top:163.5px;width:145px;height:28.3px;background:#555555;"></div>
<div class="a" style="left:806px;top:191.8px;width:145px;height:1px;background:#3a3a3a;"></div>
<svg style="left:806px;top:133px" width="20" height="60"><circle cx="7" cy="14.5" r="3.6" fill="#dcdcdc"/><circle cx="7" cy="44" r="3.6" fill="#dcdcdc"/></svg>
<div class="a" style="left:832px;top:141.5px;width:26px;height:11.5px;background:#f7d4d4;border:1px solid #f4f4f4"></div>
<svg style="left:832px;top:141.5px" width="26" height="12"><path d="M1 6 Q3.5 3.5 6 6 T11 6 T16 6 T21 6 T26 6" fill="none" stroke="#fff" stroke-width="1.6"/><path d="M1 3 h24 M1 9 h24" stroke="#e88a8a" stroke-width="0.8" stroke-dasharray="1.5 1"/></svg>
<div class="t" style="left:871.0px;top:143.4px;font-size:9.6px;transform:scaleX(0.9212);color:#ffffff;font-weight:700;">Milk</div>
<svg style="left:933px;top:140px" width="16" height="16"><g transform="translate(8 8)" fill="#fff"><circle r="4.6"/><rect x="-1.3" y="-7" width="2.6" height="3" transform="rotate(0)"/><rect x="-1.3" y="-7" width="2.6" height="3" transform="rotate(45)"/><rect x="-1.3" y="-7" width="2.6" height="3" transform="rotate(90)"/><rect x="-1.3" y="-7" width="2.6" height="3" transform="rotate(135)"/><rect x="-1.3" y="-7" width="2.6" height="3" transform="rotate(180)"/><rect x="-1.3" y="-7" width="2.6" height="3" transform="rotate(225)"/><rect x="-1.3" y="-7" width="2.6" height="3" transform="rotate(270)"/><rect x="-1.3" y="-7" width="2.6" height="3" transform="rotate(315)"/><circle r="1.8" fill="#4f98d8"/></g></svg>
<div class="a" style="left:832px;top:165px;width:26px;height:25px;background:#fff;"></div>
<svg style="left:832px;top:165px" width="26" height="25"><svg width="26" height="25" style="overflow:hidden"><use href="#chr" transform="scale(0.05556) translate(-221,-77)"/></svg></svg>
<div class="t" style="left:871.0px;top:173.4px;font-size:9.6px;transform:scaleX(0.8515);color:#e6e6e6;">Lớp1</div>
<div class="a" style="left:952px;top:133px;width:13px;height:123px;background:#2b2b2b"></div>
<div class="a" style="left:953px;top:141px;width:11px;height:105px;background:#5d5d5d;border-radius:3px"></div>
<svg style="left:952px;top:133px" width="13" height="123"><path d="M2.5 7 L6.5 2.5 L10.5 7z" fill="#bdbdbd"/><path d="M2.5 116 L6.5 120.5 L10.5 116z" fill="#bdbdbd"/></svg>
<div class="a" style="left:806px;top:256px;width:160px;height:24px;background:#262626;"></div>
<div class="tb" style="left:808.6px;top:258.6px;width:17.1px;height:17px"></div>
<div class="tb" style="left:829px;top:258.6px;width:17.0px;height:17px"></div>
<div class="tb" style="left:849px;top:258.6px;width:17.7px;height:17px"></div>
<div class="tb" style="left:870px;top:258.6px;width:21.8px;height:17px"></div>
<div class="tb" style="left:895.2px;top:258.6px;width:17.6px;height:17px"></div>
<div class="tb" style="left:921px;top:258.6px;width:17.0px;height:17px"></div>
<div class="a" style="left:916.5px;top:262px;width:1px;height:10px;background:#555;"></div>
<div class="a" style="left:958px;top:259px;width:6px;height:16px;background:#4a4a4a;border-radius:2px"></div>
<svg style="left:0;top:0" width="1024" height="300"><g fill="none" stroke="#e0e0e0" stroke-width="1">
<path d="M813.5 261.5 h5 l3 3 v8 h-8z"/>
<path d="M833.5 261.5 h5 l3 3 v8 h-8z"/><text x="835.3" y="271" font-size="7" fill="#e0e0e0" stroke="none" font-family="Liberation Sans">8</text>
<path d="M853.5 261.5 h5 l3 3 v8 h-8z"/><path d="M857.5 271 v-5 l-1.5 1.5"/>
<path d="M874.5 261.5 h5 l3 3 v4 M874.5 261.5 v11 h4"/><path d="M881 268 v6 M878 271 h6" stroke-width="1.4"/><path d="M885.5 266 h4 l-2 2.5z" fill="#e0e0e0" stroke="none"/>
<path d="M898.5 263 h4 l1.5 1.5 h6.5 v8 h-12z" fill="#e0e0e0" stroke="none"/>
<path d="M925.5 264.5 h7 v7 h-7z M928 264.5 v-2.5 h7 v7 h-2.5"/>
</g></svg>
<div class="a" style="left:803px;top:282px;width:165px;height:2px;background:#1a1a1a;"></div>
<div class="a" style="left:803px;top:284px;width:165px;height:182px;background:#232323;"></div>
<div class="a" style="left:803px;top:284px;width:165px;height:16px;background:#373636;border-top:1px solid #5585ad"></div>
<div class="t" style="left:860.0px;top:288.5px;font-size:9.2px;transform:scaleX(0.8734);color:#cfcfcf;">Cọ: Pen</div>
<svg style="left:944px;top:287px" width="20" height="10"><path d="M1.5 3 v6 h6 v-3.5 M5 3 h-3.5" fill="none" stroke="#c8c8c8" stroke-width="1.1"/><path d="M4.5 6 l3-3" fill="none" stroke="#c8c8c8" stroke-width="0.9"/><rect x="7" y="1" width="2.2" height="2.2" fill="#d0d0d0"/><path d="M14 2.5 l5.5 5.5 M19.5 2.5 l-5.5 5.5" stroke="#d8d8d8" stroke-width="1.8"/></svg>
<div class="a" style="left:806px;top:301px;width:145px;height:141px;background:#3a3a3a;"></div>
<div class="a" style="left:806px;top:302.0px;width:145px;height:14.4px;background:#555555;"></div>
<div class="a" style="left:807.8px;top:303.8px;width:10.5px;height:11px;background:#2e2e2e;"></div>
<div class="t" style="left:822.5px;top:305.1px;font-size:9.6px;transform:scaleX(0.8902);color:#e6e6e6;">20</div>
<div class="t" style="left:846.4px;top:305.1px;font-size:9.6px;color:#e6e6e6;transform:scaleX(0.92)">Pencil</div>
<div class="a" style="left:806px;top:317.1px;width:145px;height:14.4px;background:#4f98d8;"></div>
<div class="a" style="left:807.8px;top:318.9px;width:10.5px;height:11px;background:#2e2e2e;border:1px solid #1a3a5a"></div>
<div class="t" style="left:822.5px;top:320.1px;font-size:9.6px;transform:scaleX(0.8902);color:#e9a0c0;">15</div>
<div class="t" style="left:846.4px;top:320.1px;font-size:9.6px;color:#ffffff;font-weight:700;transform:scaleX(0.92)">Pen</div>
<div class="a" style="left:806px;top:332.1px;width:145px;height:14.4px;background:#555555;"></div>
<div class="a" style="left:807.8px;top:333.9px;width:10.5px;height:11px;background:#2e2e2e;"></div>
<div class="t" style="left:822.5px;top:335.2px;font-size:9.6px;transform:scaleX(0.8902);color:#e6e6e6;">10</div>
<div class="t" style="left:846.4px;top:335.2px;font-size:9.6px;color:#e6e6e6;transform:scaleX(0.92)">Pen (Sharp)</div>
<div class="a" style="left:806px;top:347.2px;width:145px;height:14.4px;background:#555555;"></div>
<div class="a" style="left:807.8px;top:349.0px;width:10.5px;height:11px;background:#f23a3a;"></div>
<div class="t" style="left:822.5px;top:350.3px;font-size:9.6px;transform:scaleX(0.8902);color:#e6e6e6;">15</div>
<div class="t" style="left:846.4px;top:350.3px;font-size:9.6px;color:#e6e6e6;transform:scaleX(0.92)">G Pen</div>
<div class="a" style="left:806px;top:362.2px;width:145px;height:14.4px;background:#555555;"></div>
<div class="a" style="left:807.8px;top:364.0px;width:10.5px;height:11px;background:#f23a3a;"></div>
<div class="t" style="left:822.5px;top:365.3px;font-size:9.6px;transform:scaleX(0.8902);color:#e6e6e6;">15</div>
<div class="t" style="left:846.4px;top:365.3px;font-size:9.6px;color:#e6e6e6;transform:scaleX(0.92)">Mapping Pen</div>
<div class="a" style="left:806px;top:377.3px;width:145px;height:14.4px;background:#555555;"></div>
<div class="a" style="left:807.8px;top:379.1px;width:10.5px;height:11px;background:#1fbf1f;"></div>
<div class="t" style="left:822.5px;top:380.4px;font-size:9.6px;transform:scaleX(0.8902);color:#e6e6e6;">10</div>
<div class="t" style="left:846.4px;top:380.4px;font-size:9.6px;color:#e6e6e6;transform:scaleX(0.92)">Edge Pen</div>
<div class="a" style="left:806px;top:392.4px;width:145px;height:14.4px;background:#555555;"></div>
<div class="a" style="left:807.8px;top:394.2px;width:10.5px;height:11px;background:#e8d818;"></div>
<div class="t" style="left:822.5px;top:395.4px;font-size:9.6px;transform:scaleX(0.8902);color:#e6e6e6;">50</div>
<div class="t" style="left:846.4px;top:395.4px;font-size:9.6px;color:#e6e6e6;transform:scaleX(0.92)">Stipple Pen</div>
<div class="a" style="left:806px;top:407.4px;width:145px;height:14.4px;background:#555555;"></div>
<div class="a" style="left:807.8px;top:409.2px;width:10.5px;height:11px;background:#e8d818;"></div>
<div class="t" style="left:822.5px;top:410.5px;font-size:9.6px;transform:scaleX(0.8902);color:#e6e6e6;">50</div>
<div class="t" style="left:846.4px;top:410.5px;font-size:9.6px;color:#e6e6e6;transform:scaleX(0.92)">Sumi</div>
<div class="a" style="left:806px;top:422.5px;width:145px;height:14.4px;background:#555555;"></div>
<div class="a" style="left:807.8px;top:424.3px;width:10.5px;height:11px;background:#7ed4f8;"></div>
<div class="t" style="left:822.5px;top:425.6px;font-size:9.6px;transform:scaleX(0.8902);color:#e6e6e6;">50</div>
<div class="t" style="left:846.4px;top:425.6px;font-size:9.6px;color:#e6e6e6;transform:scaleX(0.92)">Watercolor</div>
<div class="a" style="left:806px;top:437.5px;width:145px;height:4.5px;background:#555555;"></div>
<div class="a" style="left:807.8px;top:439.3px;width:10.5px;height:2.7px;background:#7ed4f8;"></div>
<svg style="left:938px;top:317.5px" width="12" height="14"><g transform="translate(5.8 7.2)" fill="#fff"><circle r="3.4"/><rect x="-1" y="-5.2" width="2" height="2.4" transform="rotate(0)"/><rect x="-1" y="-5.2" width="2" height="2.4" transform="rotate(45)"/><rect x="-1" y="-5.2" width="2" height="2.4" transform="rotate(90)"/><rect x="-1" y="-5.2" width="2" height="2.4" transform="rotate(135)"/><rect x="-1" y="-5.2" width="2" height="2.4" transform="rotate(180)"/><rect x="-1" y="-5.2" width="2" height="2.4" transform="rotate(225)"/><rect x="-1" y="-5.2" width="2" height="2.4" transform="rotate(270)"/><rect x="-1" y="-5.2" width="2" height="2.4" transform="rotate(315)"/><circle r="1.3" fill="#4f98d8"/></g></svg>
<div class="a" style="left:952px;top:301px;width:13px;height:141px;background:#2b2b2b"></div>
<div class="a" style="left:953px;top:310.6px;width:11px;height:45px;background:#5d5d5d;border-radius:3px"></div>
<svg style="left:952px;top:301px" width="13" height="141"><path d="M2.5 8 L6.5 3.5 L10.5 8z" fill="#bdbdbd"/><path d="M2.5 133 L6.5 137.5 L10.5 133z" fill="#bdbdbd"/></svg>
<div class="a" style="left:806px;top:442px;width:160px;height:22px;background:#262626;"></div>
<div class="tb" style="left:808.6px;top:444.7px;width:17.4px;height:17.3px"></div>
<div class="tb" style="left:829px;top:444.7px;width:17.4px;height:17.3px"></div>
<div class="tb" style="left:849.3px;top:444.7px;width:22.5px;height:17.3px"></div>
<div class="tb" style="left:875.3px;top:444.7px;width:16.4px;height:17.3px"></div>
<div class="tb" style="left:895.2px;top:444.7px;width:17.3px;height:17.3px"></div>
<div class="tb" style="left:915.6px;top:444.7px;width:17.3px;height:17.3px"></div>
<div class="tb" style="left:941px;top:444.7px;width:17.8px;height:17.3px"></div>
<div class="a" style="left:936.5px;top:448px;width:1px;height:10px;background:#555;"></div>
<svg style="left:0;top:0" width="1024" height="480"><g fill="none" stroke="#e0e0e0" stroke-width="1">
<path d="M813 452 a3 3 0 0 1 1-5 a3.5 3.5 0 0 1 6.5-0.5 a2.5 2.5 0 0 1 1 5z" fill="#e0e0e0" stroke="none"/><path d="M817.3 450 v8 M815 456 l2.3 2.3 l2.3-2.3" stroke="#e0e0e0" stroke-width="1.3"/>
<path d="M833.5 447.5 h5 l3 3 v8 h-8z"/>
<path d="M853.5 447.5 h5 l3 3 v8 h-8z"/><rect x="855" y="451" width="3" height="3" fill="#e0e0e0" stroke="none"/><rect x="857" y="454" width="3" height="3" fill="#e0e0e0" stroke="none"/><path d="M864 452 h4 l-2 2.5z" fill="#e0e0e0" stroke="none"/>
<path d="M879.5 447.5 h5 l3 3 v8 h-8z"/><text x="881" y="457" font-size="7" fill="#e0e0e0" stroke="none" font-family="Liberation Sans">5</text>
<path d="M898.5 449 h4 l1.5 1.5 h6.5 v8 h-12z" fill="#e0e0e0" stroke="none"/>
<path d="M920 450.5 h7 v7 h-7z M922.5 450.5 v-2.5 h7 v7 h-2.5"/>
<path d="M945 450.5 h10 M946 450.5 v8 h8 v-8 M948 448.5 h4 M948.5 452 v5 M951.5 452 v5" stroke-width="1.2"/>
</g></svg>
<div class="a" style="left:803px;top:466px;width:165px;height:4px;background:#1a1a1a;"></div>
<div class="a" style="left:803px;top:470px;width:165px;height:92px;background:#232323;"></div>
<div class="a" style="left:803px;top:470px;width:165px;height:16px;background:#373636;border-top:1px solid #5585ad"></div>
<div class="t" style="left:850.0px;top:474.6px;font-size:9.2px;transform:scaleX(0.8504);color:#cfcfcf;">Xem trước cọ</div>
<svg style="left:944px;top:473px" width="20" height="10"><path d="M1.5 3 v6 h6 v-3.5 M5 3 h-3.5" fill="none" stroke="#c8c8c8" stroke-width="1.1"/><path d="M4.5 6 l3-3" fill="none" stroke="#c8c8c8" stroke-width="0.9"/><rect x="7" y="1" width="2.2" height="2.2" fill="#d0d0d0"/><path d="M14 2.5 l5.5 5.5 M19.5 2.5 l-5.5 5.5" stroke="#d8d8d8" stroke-width="1.8"/></svg>
<div class="a" style="left:804.2px;top:486px;width:64px;height:76px;background:#fff;"></div>
<div class="a" style="left:868px;top:486px;width:1px;height:76px;background:#8a8a8a;"></div>
<div class="a" style="left:869px;top:486px;width:98px;height:76px;background-color:#fff;background-image:linear-gradient(45deg,#ebebeb 25%,transparent 25%,transparent 75%,#ebebeb 75%),linear-gradient(45deg,#ebebeb 25%,transparent 25%,transparent 75%,#ebebeb 75%);background-size:10px 10px;background-position:0 0,5px 5px"></div>
<div class="t" style="left:808.3px;top:488.0px;font-size:9.2px;transform:scaleX(0.8772);color:#5a90c4;">* 1.09mm</div>
<svg style="left:0;top:0" width="1024" height="578"><circle cx="836.5" cy="524.4" r="1.7" fill="#222"/><path d="M875.5,524 C880,521 886,516 891.3,514.8 C897,512.5 902,511.5 906.2,511.5 C912,511.8 916,512 919.5,513.5 C925,516 929,518 932.8,519.8 C938,522.5 941,524.5 946,524.8 C952,525 957,524.6 961.9,524.4 C961,526 960,526.5 959.4,527.3 C956,529.5 953,531 949.4,532.3 C945,534 942,534.6 939.4,534.4 C935,534 932,532.5 929.5,530.6 C924,526.5 920,523 916.2,520.6 C912,518.5 908,518 904.6,518.1 C899,518.3 894,518.4 889.6,519 C884,520 879,522.5 875.5,524 Z" fill="#000"/></svg>
<div class="a" style="left:968px;top:56px;width:3px;height:506px;background:#1c1c1c;"></div>
<div class="a" style="left:971px;top:57px;width:53px;height:505px;background:#3c3c3c;"></div>
<div class="a" style="left:971px;top:57px;width:53px;height:16px;background:#373636;border-top:1px solid #5585ad"></div>
<div class="t" style="left:974.4px;top:61.8px;font-size:9.2px;transform:scaleX(0.8584);color:#cfcfcf;">Brus...</div>
<svg style="left:1001px;top:60px" width="20" height="10"><path d="M1.5 3 v6 h6 v-3.5 M5 3 h-3.5" fill="none" stroke="#c8c8c8" stroke-width="1.1"/><path d="M4.5 6 l3-3" fill="none" stroke="#c8c8c8" stroke-width="0.9"/><rect x="7" y="1" width="2.2" height="2.2" fill="#d0d0d0"/><path d="M14 2.5 l5.5 5.5 M19.5 2.5 l-5.5 5.5" stroke="#d8d8d8" stroke-width="1.8"/></svg>
<div class="a" style="left:971px;top:73px;width:29.5px;height:489px;background:#4a4a4a;"></div>
<svg style="left:0;top:0" width="1024" height="578"><svg x="971" y="73" width="30" height="489" style="overflow:hidden"><g transform="translate(-971 -73)"><circle cx="985.6" cy="69.4" r="4.5" fill="#efefef"/><rect x="971" y="92.0" width="29.5" height="1" fill="#3a3a3a"/><circle cx="985.6" cy="106.9" r="5.7" fill="#efefef"/><rect x="971" y="129.5" width="29.5" height="1" fill="#3a3a3a"/><circle cx="985.6" cy="144.2" r="7.5" fill="#efefef"/><rect x="971" y="166.8" width="29.5" height="1" fill="#3a3a3a"/><circle cx="985.6" cy="182.1" r="9" fill="#efefef"/><rect x="971" y="204.7" width="29.5" height="1" fill="#3a3a3a"/><circle cx="985.6" cy="220.3" r="9" fill="#efefef"/><rect x="971" y="242.9" width="29.5" height="1" fill="#3a3a3a"/><circle cx="985.6" cy="257.4" r="9" fill="#efefef"/><rect x="971" y="280.0" width="29.5" height="1" fill="#3a3a3a"/><circle cx="985.6" cy="294.9" r="9" fill="#efefef"/><rect x="971" y="317.5" width="29.5" height="1" fill="#3a3a3a"/><circle cx="985.6" cy="333" r="9" fill="#efefef"/><rect x="971" y="355.6" width="29.5" height="1" fill="#3a3a3a"/><circle cx="985.6" cy="370.5" r="9" fill="#efefef"/><rect x="971" y="393.1" width="29.5" height="1" fill="#3a3a3a"/><circle cx="985.6" cy="408.1" r="9" fill="#efefef"/><rect x="971" y="430.7" width="29.5" height="1" fill="#3a3a3a"/><circle cx="985.6" cy="445.5" r="9" fill="#efefef"/><rect x="971" y="468.1" width="29.5" height="1" fill="#3a3a3a"/><circle cx="985.6" cy="482.8" r="9" fill="#efefef"/><rect x="971" y="505.4" width="29.5" height="1" fill="#3a3a3a"/><circle cx="985.6" cy="520.4" r="9" fill="#efefef"/><rect x="971" y="543.0" width="29.5" height="1" fill="#3a3a3a"/><circle cx="985.6" cy="557.8" r="9" fill="#efefef"/><rect x="971" y="580.4" width="29.5" height="1" fill="#3a3a3a"/></g></svg></svg>
<div class="t" style="left:982.4px;top:83.6px;font-size:8.0px;transform:scaleX(0.7298);color:#dcdcdc;">12</div>
<div class="t" style="left:982.4px;top:121.1px;font-size:8.0px;transform:scaleX(0.7298);color:#dcdcdc;">15</div>
<div class="t" style="left:982.4px;top:158.4px;font-size:8.0px;transform:scaleX(0.7298);color:#dcdcdc;">20</div>
<div class="t" style="left:982.4px;top:196.3px;font-size:8.0px;transform:scaleX(0.7298);color:#dcdcdc;">25</div>
<div class="t" style="left:982.4px;top:234.5px;font-size:8.0px;transform:scaleX(0.7298);color:#dcdcdc;">30</div>
<div class="t" style="left:982.4px;top:271.6px;font-size:8.0px;transform:scaleX(0.7298);color:#dcdcdc;">40</div>
<div class="t" style="left:982.4px;top:309.1px;font-size:8.0px;transform:scaleX(0.7298);color:#dcdcdc;">50</div>
<div class="t" style="left:982.4px;top:347.2px;font-size:8.0px;transform:scaleX(0.7298);color:#dcdcdc;">70</div>
<div class="t" style="left:980.4px;top:384.7px;font-size:8.0px;transform:scaleX(0.7860);color:#dcdcdc;">100</div>
<div class="t" style="left:980.4px;top:422.3px;font-size:8.0px;transform:scaleX(0.7860);color:#dcdcdc;">150</div>
<div class="t" style="left:980.4px;top:459.7px;font-size:8.0px;transform:scaleX(0.7860);color:#dcdcdc;">200</div>
<div class="t" style="left:980.4px;top:497.0px;font-size:8.0px;transform:scaleX(0.7860);color:#dcdcdc;">300</div>
<div class="t" style="left:980.4px;top:534.6px;font-size:8.0px;transform:scaleX(0.7860);color:#dcdcdc;">400</div>
<div class="a" style="left:971px;top:73px;width:29.5px;height:0px;background:#4a4a4a;"></div>
<div class="a" style="left:1009px;top:73px;width:14px;height:489px;background:linear-gradient(90deg,#2c2c2c,#383838 50%,#2c2c2c)"></div>
<div class="a" style="left:1010.5px;top:249px;width:12px;height:254px;background:#666;border-radius:3px"></div>
<svg style="left:1009px;top:73px" width="14" height="489"><path d="M3 8 L7 3.5 L11 8z" fill="#bdbdbd"/><path d="M3 481 L7 485.5 L11 481z" fill="#bdbdbd"/></svg>
</body></html>
